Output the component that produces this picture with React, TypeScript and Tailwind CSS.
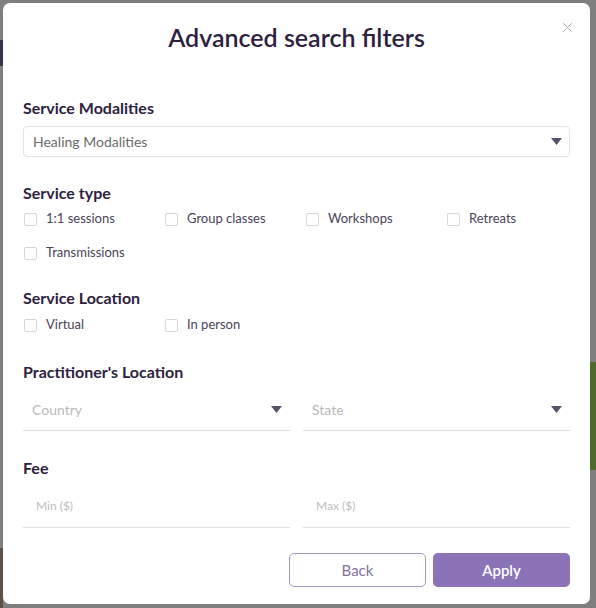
import { X } from 'lucide-react'

const serviceTypes = ['1:1 sessions', 'Group classes', 'Workshops', 'Retreats', 'Transmissions']
const locations = ['Virtual', 'In person']

function Caret() {
  return (
    <svg width="11" height="7" viewBox="0 0 11 7" className="shrink-0">
      <path d="M0 0h11L5.5 7z" fill="#57546a" />
    </svg>
  )
}

function Check({ label }: { label: string }) {
  return (
    <label className="flex items-center h-[20px] gap-[9px] text-[13px] text-[#4a4358]">
      <span className="w-[13px] h-[13px] border border-[#d6d6d6] rounded-[2px] bg-white" />
      {label}
    </label>
  )
}

function Heading({ children }: { children: string }) {
  return <h3 className="text-[16px] font-bold text-[#2d2140] leading-[20px]">{children}</h3>
}

export default function App() {
  return (
    <div className="w-[596px] h-[608px] bg-[#7f7f7f] flex overflow-hidden" style={{ fontFamily: 'Lato, "Open Sans", sans-serif' }}>
      <div className="w-[3px] shrink-0 flex flex-col">
        <div className="h-[40px]" />
        <div className="h-[26px] bg-[#3a3548]" />
        <div className="flex-1" />
        <div className="h-[60px] bg-[#5e5248]" />
      </div>
      <div className="mt-[3px] w-[587px] h-[601px] bg-white rounded-[7px] px-[20px] flex flex-col">
        <div className="relative h-[68px] flex items-center justify-center">
          <h2 className="text-[25px] font-semibold text-[#2d2140] leading-none">Advanced search filters</h2>
          <X className="absolute right-[-6px] top-[16px] w-[17px] h-[17px] text-[#a9a9a9]" strokeWidth={1.2} />
        </div>

        <div className="mt-[27px]">
          <Heading>Service Modalities</Heading>
          <div className="mt-[8px] h-[31px] border border-[#e3e3e3] rounded-[4px] flex items-center justify-between pl-[9px] pr-[7px]">
            <span className="text-[14px] text-[#6b6b6b]">Healing Modalities</span>
            <Caret />
          </div>
        </div>

        <div className="mt-[26px]">
          <Heading>Service type</Heading>
          <div className="mt-[6px] grid grid-cols-[141px_141px_141px_auto] gap-y-[14px] pl-[1px]">
            {serviceTypes.map((t) => (
              <Check key={t} label={t} />
            ))}
          </div>
        </div>

        <div className="mt-[25px]">
          <Heading>Service Location</Heading>
          <div className="mt-[7px] grid grid-cols-[141px_141px_141px_auto] pl-[1px]">
            {locations.map((t) => (
              <Check key={t} label={t} />
            ))}
          </div>
        </div>

        <div className="mt-[27px]">
          <Heading>Practitioner's Location</Heading>
          <div className="mt-[9px] grid grid-cols-2 gap-x-[13px]">
            {['Country', 'State'].map((p) => (
              <div key={p} className="h-[40px] border-b border-[#e0e0e0] flex items-center justify-between pl-[9px] pr-[8px] pb-[2px]">
                <span className="text-[14px] text-[#b9b9b9]">{p}</span>
                <Caret />
              </div>
            ))}
          </div>
        </div>

        <div className="mt-[27px]">
          <Heading>Fee</Heading>
          <div className="mt-[8px] grid grid-cols-2 gap-x-[13px]">
            {['Min ($)', 'Max ($)'].map((p) => (
              <div key={p} className="h-[42px] border-b border-[#e0e0e0] flex items-center pl-[13px] pb-[2px]">
                <span className="text-[12px] text-[#bdbdbd]">{p}</span>
              </div>
            ))}
          </div>
        </div>

        <div className="mt-[25px] flex justify-end gap-[7px]">
          <button className="w-[137px] h-[34px] rounded-[5px] border border-[#a496c4] text-[15px] text-[#7f72a0]">Back</button>
          <button className="w-[137px] h-[34px] rounded-[5px] bg-[#8c73b8] text-[15px] font-semibold text-white">Apply</button>
        </div>
      </div>
      <div className="flex-1 flex flex-col">
        <div className="h-[362px]" />
        <div className="h-[108px] bg-[#4f6a2c]" />
        <div className="flex-1" />
      </div>
    </div>
  )
}
